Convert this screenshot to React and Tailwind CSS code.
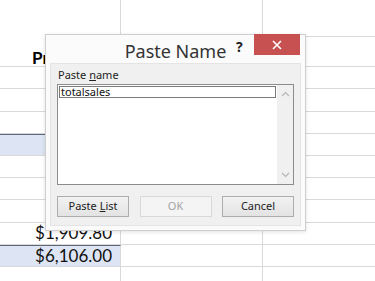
function Row({ h, a, aCls = "", blue = false }) {
  return (
    <div className="flex" style={{ height: h }}>
      <div
        className={`w-[121px] shrink-0 border-r border-b border-[#d9d9d9] flex items-end justify-end pr-[8px] whitespace-nowrap ${
          blue ? "bg-[#dde4f4] border-t border-t-[#5e6678]" : ""
        } ${aCls}`}
      >
        {a}
      </div>
      <div className="w-[142px] shrink-0 border-r border-b border-[#d9d9d9]" />
      <div className="flex-1 border-b border-[#d9d9d9]" />
    </div>
  );
}

function Btn({ children, disabled }) {
  return (
    <button
      className={`w-[72px] h-[21px] text-[11px] border whitespace-nowrap ${
        disabled
          ? "border-[#d9d9d9] bg-[#f4f4f4] text-[#a3a3a3]"
          : "border-[#adadad] bg-gradient-to-b from-[#f2f2f2] to-[#e3e3e3] text-[#222]"
      }`}
    >
      {children}
    </button>
  );
}

export default function App() {
  return (
    <div className="relative w-[375px] h-[281px] overflow-hidden bg-white" style={{ fontFamily: "Lato, 'Liberation Sans', sans-serif" }}>
      <div className="flex flex-col">
        <div className="flex h-[37px]">
          <div className="w-[121px] shrink-0 border-r border-[#d9d9d9]" />
          <div className="w-[142px] shrink-0 border-r border-b border-[#d9d9d9]" />
          <div className="flex-1 border-b border-[#d9d9d9]" />
        </div>
        <div className="flex h-[30px]">
          <div className="w-[121px] shrink-0 border-r border-b border-[#d9d9d9] pl-[32px] pt-[8px] text-[17px] font-bold text-black whitespace-nowrap">
            Price
          </div>
          <div className="w-[142px] shrink-0 border-r border-b border-[#d9d9d9]" />
          <div className="flex-1 border-b border-[#d9d9d9]" />
        </div>
        <Row h={22} />
        <Row h={23} />
        <Row h={22} />
        <Row h={22} blue />
        <Row h={22} />
        <Row h={22} />
        <Row h={23} />
        <Row h={22} a="$1,909.80" aCls="text-[17px] leading-[22px] text-[#111]" />
        <Row h={22} blue a="$6,106.00" aCls="text-[17px] leading-[21px] text-[#111]" />
        <Row h={22} />
      </div>

      <div
        className="absolute left-[45px] top-[34px] w-[261px] h-[197px] bg-[#fbfbfb] border border-[#cfcfcf] shadow-[0_1px_4px_rgba(0,0,0,0.12)] flex flex-col"
        style={{ fontFamily: "'Noto Sans', 'Open Sans', sans-serif" }}
      >
        <div className="relative h-[28px] shrink-0">
          <div className="absolute left-0 right-0 top-[4px] text-center text-[18px] leading-[24px] text-[#333]">
            Paste Name
          </div>
          <div className="absolute left-[190px] top-[1px] text-[14px] font-bold text-[#222]">?</div>
          <div className="absolute right-[5px] top-[-1px] w-[46px] h-[21px] bg-[#c75050] flex items-center justify-center">
            <svg width="10" height="10" viewBox="0 0 10 10">
              <path d="M1 1 L9 9 M9 1 L1 9" stroke="#fff" strokeWidth="1.6" />
            </svg>
          </div>
        </div>
        <div className="mx-[4px] mb-[4px] flex-1 bg-[#f0f0f0] border border-[#e4e4e4] px-[6px] pt-[4px]">
          <div className="text-[11px] leading-[13px] text-[#222] ml-[1px]">
            Paste <span className="underline">n</span>ame
          </div>
          <div className="mt-[3px] h-[101px] bg-white border border-[#8c8c8c] flex">
            <div className="flex-1 p-[1px]">
              <div className="h-[12px] border border-[#7a7a7a] text-[11px] leading-[10px] pl-[1px] text-[#111]">
                totalsales
              </div>
            </div>
            <div className="w-[16px] bg-[#f0f0f0] flex flex-col justify-between items-center py-[6px]">
              <svg width="9" height="6" viewBox="0 0 9 6">
                <path d="M1 5 L4.5 1.5 L8 5" stroke="#b5b5b5" strokeWidth="1.2" fill="none" />
              </svg>
              <svg width="9" height="6" viewBox="0 0 9 6">
                <path d="M1 1 L4.5 4.5 L8 1" stroke="#b5b5b5" strokeWidth="1.2" fill="none" />
              </svg>
            </div>
          </div>
          <div className="mt-[11px] flex justify-between">
            <Btn>
              Paste <span className="underline">L</span>ist
            </Btn>
            <Btn disabled>OK</Btn>
            <Btn>Cancel</Btn>
          </div>
        </div>
      </div>
    </div>
  );
}
